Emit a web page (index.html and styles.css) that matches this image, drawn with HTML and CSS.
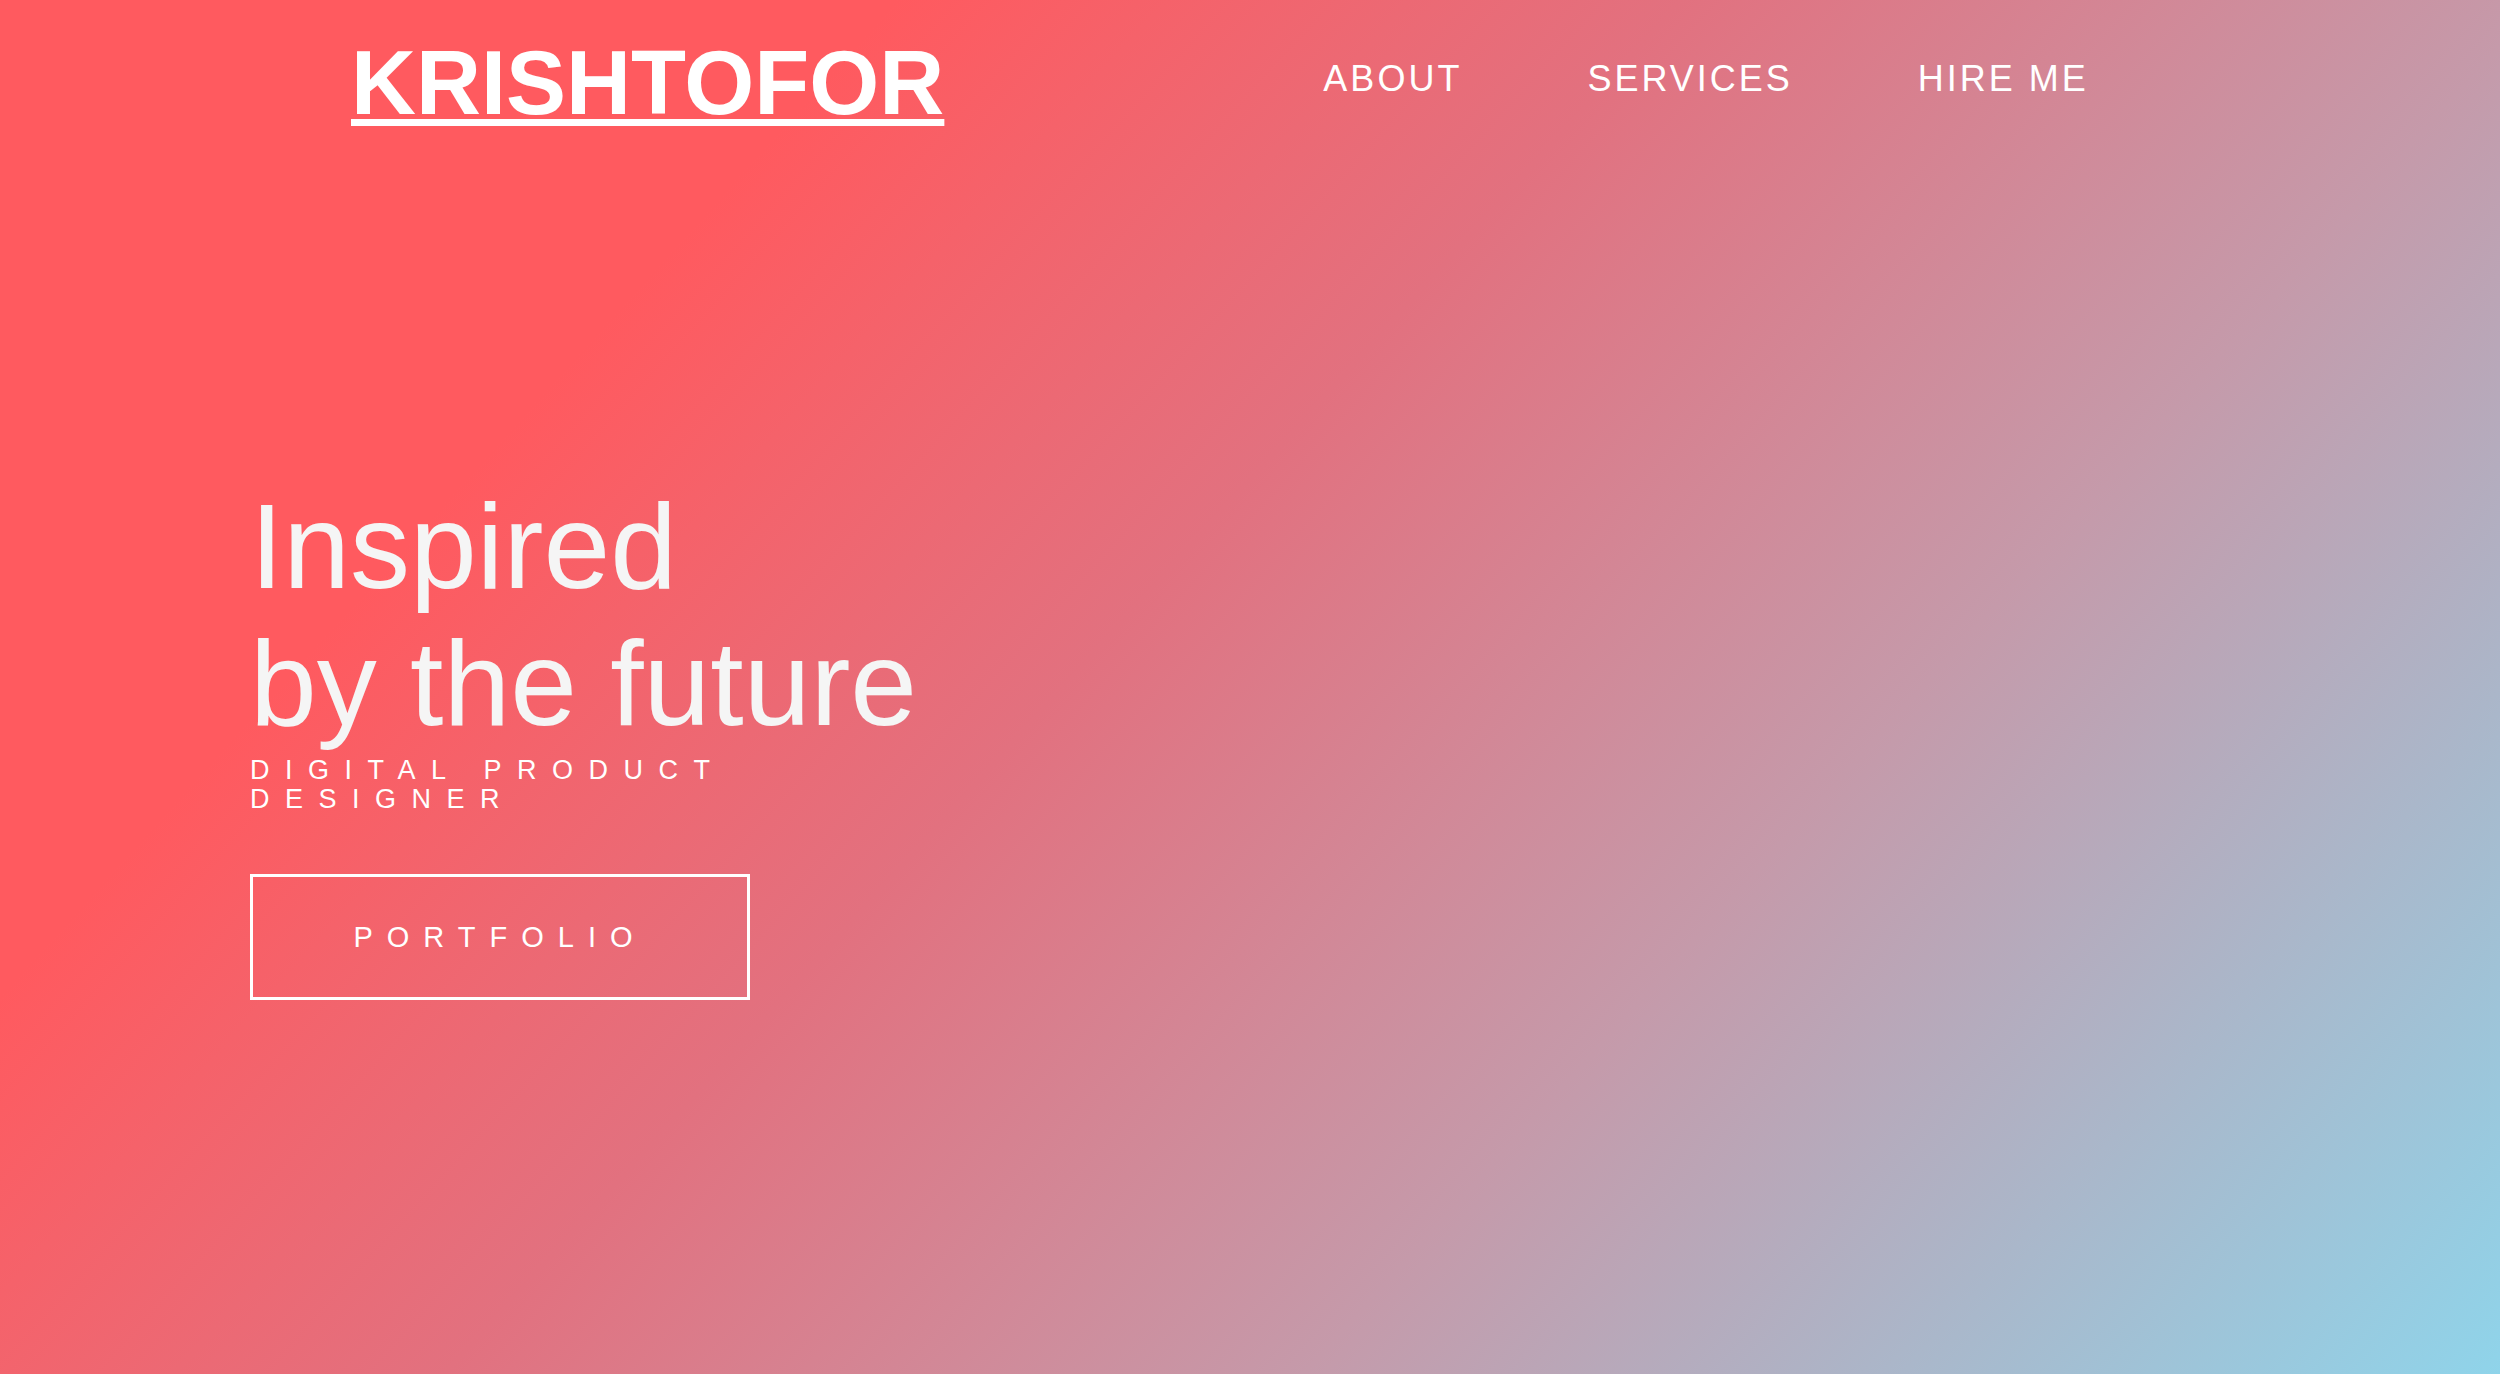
FILE: index.html
```html
<!DOCTYPE html>
<html lang="en">
<head>
<meta charset="utf-8">
<title>Krishtofor</title>
<link rel="stylesheet" href="styles.css">
</head>
<body>
<div class="page">
  <header class="header">
    <a class="logo" href="#">KRISHTOFOR</a>
    <nav class="nav">
      <a class="nav-link" href="#">ABOUT</a>
      <a class="nav-link" href="#">SERVICES</a>
      <a class="nav-link" href="#">HIRE ME</a>
    </nav>
  </header>
  <main class="hero">
    <h1 class="hero-title">Inspired<br>by the future</h1>
    <p class="hero-subtitle">DIGITAL PRODUCT DESIGNER</p>
    <a class="hero-button" href="#">PORTFOLIO</a>
  </main>
</div>
</body>
</html>
```
FILE: styles.css
```css
* { box-sizing: border-box; }
html, body { margin: 0; padding: 0; }
body {
  font-family: "Liberation Sans", Arial, sans-serif;
  color: #ffffff;
  overflow: hidden;
}
.page {
  min-height: 1374px;
  height: 100vh;
  background: linear-gradient(132deg, #ff5a5f 0%, #ff5a5f 24%, #e2717f 45%, #c59aaa 68%, #8fd4ea 100%);
}
.header {
  display: flex;
  align-items: flex-start;
  padding: 38px 0 0 351px;
}
.logo {
  font-size: 90px;
  line-height: 90px;
  font-weight: 700;
  color: #ffffff;
  text-decoration: underline;
  text-decoration-thickness: 7px;
  text-underline-offset: 5px;
}
.nav {
  display: flex;
  gap: 125px;
  margin-left: 379px;
  margin-top: 23px;
}
.nav-link {
  font-size: 36px;
  line-height: 36px;
  letter-spacing: 3px;
  color: #ffffff;
  text-decoration: none;
}
.hero {
  padding: 350px 0 0 250px;
  display: flex;
  flex-direction: column;
  align-items: flex-start;
}
.hero-title {
  margin: 0;
  font-size: 120px;
  line-height: 137px;
  font-weight: 400;
  color: #f5f5f5;
}
.hero-subtitle {
  margin: 4px 0 0;
  max-width: 700px;
  font-size: 27px;
  line-height: 29px;
  letter-spacing: 15.5px;
  color: #ffffff;
}
.hero-button {
  margin-top: 60px;
  width: 500px;
  height: 126px;
  border: 3px solid #ffffff;
  display: flex;
  align-items: center;
  justify-content: center;
  font-size: 29px;
  letter-spacing: 14px;
  color: #ffffff;
  text-decoration: none;
}
```
